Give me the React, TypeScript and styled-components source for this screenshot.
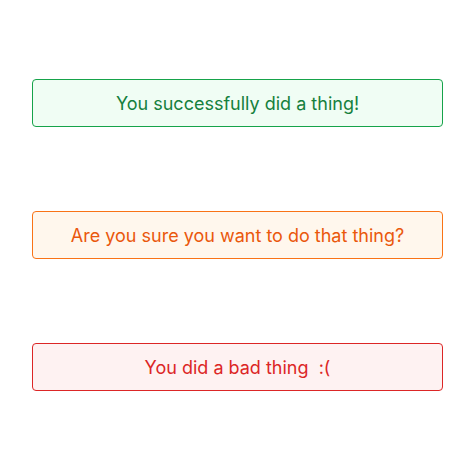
import React from "react";
import styled, { createGlobalStyle } from "styled-components";

const GlobalStyle = createGlobalStyle`
  html, body {
    margin: 0;
    padding: 0;
    background: #ffffff;
  }
  body {
    font-family: Inter, "Noto Sans", sans-serif;
  }
`;

const Page = styled.div`
  display: flex;
  flex-direction: column;
  gap: 84px;
  padding: 79px 32px;
`;

type Tone = "success" | "warning" | "error";

const palette: Record<Tone, { border: string; bg: string; text: string }> = {
  success: { border: "#16a34a", bg: "#f0fdf4", text: "#15803d" },
  warning: { border: "#f97316", bg: "#fff7ed", text: "#ea580c" },
  error: { border: "#dc2626", bg: "#fef2f2", text: "#dc2626" },
};

const Alert = styled.div<{ $tone: Tone }>`
  display: flex;
  align-items: center;
  justify-content: center;
  height: 48px;
  box-sizing: border-box;
  border: 1px solid ${(p) => palette[p.$tone].border};
  border-radius: 4px;
  background: ${(p) => palette[p.$tone].bg};
  color: ${(p) => palette[p.$tone].text};
  font-size: 18px;
  white-space: pre;
`;

export default function App() {
  return (
    <>
      <GlobalStyle />
      <Page>
        <Alert $tone="success">You successfully did a thing!</Alert>
        <Alert $tone="warning">Are you sure you want to do that thing?</Alert>
        <Alert $tone="error">You did a bad thing  :(</Alert>
      </Page>
    </>
  );
}
